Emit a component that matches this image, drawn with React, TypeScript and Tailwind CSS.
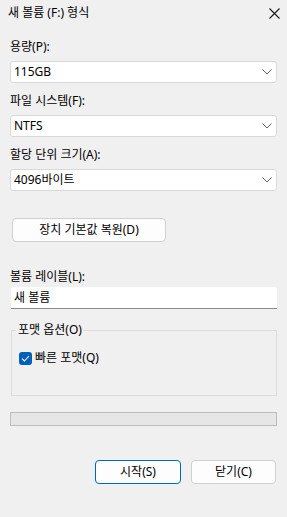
import React from "react";

const Chevron = () => (
  <svg width="10" height="6" viewBox="0 0 10 6" className="shrink-0">
    <path d="M0.5 0.5 L5 5 L9.5 0.5" fill="none" stroke="#5f5f5f" strokeWidth="1" />
  </svg>
);

const Combo = ({ value }: { value: string }) => (
  <div className="mt-[6px] h-[22px] flex items-center justify-between bg-white border border-[#d9d9d9] rounded-[3px] pl-[3px] pr-[4px]">
    <span className="text-[12px] leading-[16px] text-black">{value}</span>
    <Chevron />
  </div>
);

const Label = ({ children, className = "" }: { children: React.ReactNode; className?: string }) => (
  <div className={`h-[16px] leading-[16px] text-[12px] text-black ${className}`}>{children}</div>
);

export default function App() {
  return (
    <div
      className="w-[287px] h-[517px] bg-[#f0f0f0] flex flex-col overflow-hidden"
      style={{ fontFamily: "'Noto Sans', 'Noto Sans CJK KR', sans-serif" }}
    >
      <div className="h-[30px] shrink-0 flex items-center justify-between pl-[8px] pr-[7px] pb-[4px]">
        <span className="text-[12px] leading-[16px] text-black">새 볼륨 (F:) 형식</span>
        <svg width="11" height="11" viewBox="0 0 11 11">
          <path d="M0.5 0.5 L10.5 10.5 M10.5 0.5 L0.5 10.5" stroke="#1a1a1a" strokeWidth="1.1" />
        </svg>
      </div>
      <div className="flex flex-col px-[10px]">
        <Label className="mt-[9px]">용량(P):</Label>
        <Combo value="115GB" />
        <Label className="mt-[10px]">파일 시스템(F):</Label>
        <Combo value="NTFS" />
        <Label className="mt-[10px]">할당 단위 크기(A):</Label>
        <Combo value="4096바이트" />
        <button className="mt-[27px] ml-[2px] w-[154px] h-[24px] bg-[#fdfdfd] border border-[#d0d0d0] rounded-[4px] text-[12px] leading-[16px] text-black flex items-center justify-center">
          장치 기본값 복원(D)
        </button>
        <Label className="mt-[27px]">볼륨 레이블(L):</Label>
        <div className="mt-[2px] ml-px h-[22px] flex items-center bg-white border-b border-[#8a8a8a] rounded-t-[2px] pl-[3px]">
          <span className="text-[12px] leading-[16px] text-black">새 볼륨</span>
        </div>
        <fieldset className="mt-[13px] ml-px h-[74px] border border-[#dcdcdc] pl-[4px]">
          <legend className="px-[2px] text-[12px] leading-[16px] text-black">포맷 옵션(O)</legend>
          <div className="mt-[12px] ml-[3px] flex items-center gap-[3px]">
            <div className="w-[13px] h-[13px] rounded-[3px] bg-[#005fb8] flex items-center justify-center">
              <svg width="9" height="7" viewBox="0 0 9 7">
                <path d="M1 3.6 L3.4 6 L8 1" fill="none" stroke="white" strokeWidth="1.1" />
              </svg>
            </div>
            <span className="text-[12px] leading-[16px] text-black">빠른 포맷(Q)</span>
          </div>
        </fieldset>
        <div className="mt-[16px] h-[14px] border border-[#bcbcbc] bg-[#e6e6e6]" />
        <div className="mt-[34px] flex justify-end gap-[10px] pr-px">
          <button className="w-[86px] h-[24px] bg-[#fdfdfd] border border-[#0067c0] rounded-[4px] text-[12px] leading-[16px] text-black flex items-center justify-center">
            시작(S)
          </button>
          <button className="w-[85px] h-[24px] bg-[#fdfdfd] border border-[#d0d0d0] rounded-[4px] text-[12px] leading-[16px] text-black flex items-center justify-center">
            닫기(C)
          </button>
        </div>
      </div>
    </div>
  );
}
